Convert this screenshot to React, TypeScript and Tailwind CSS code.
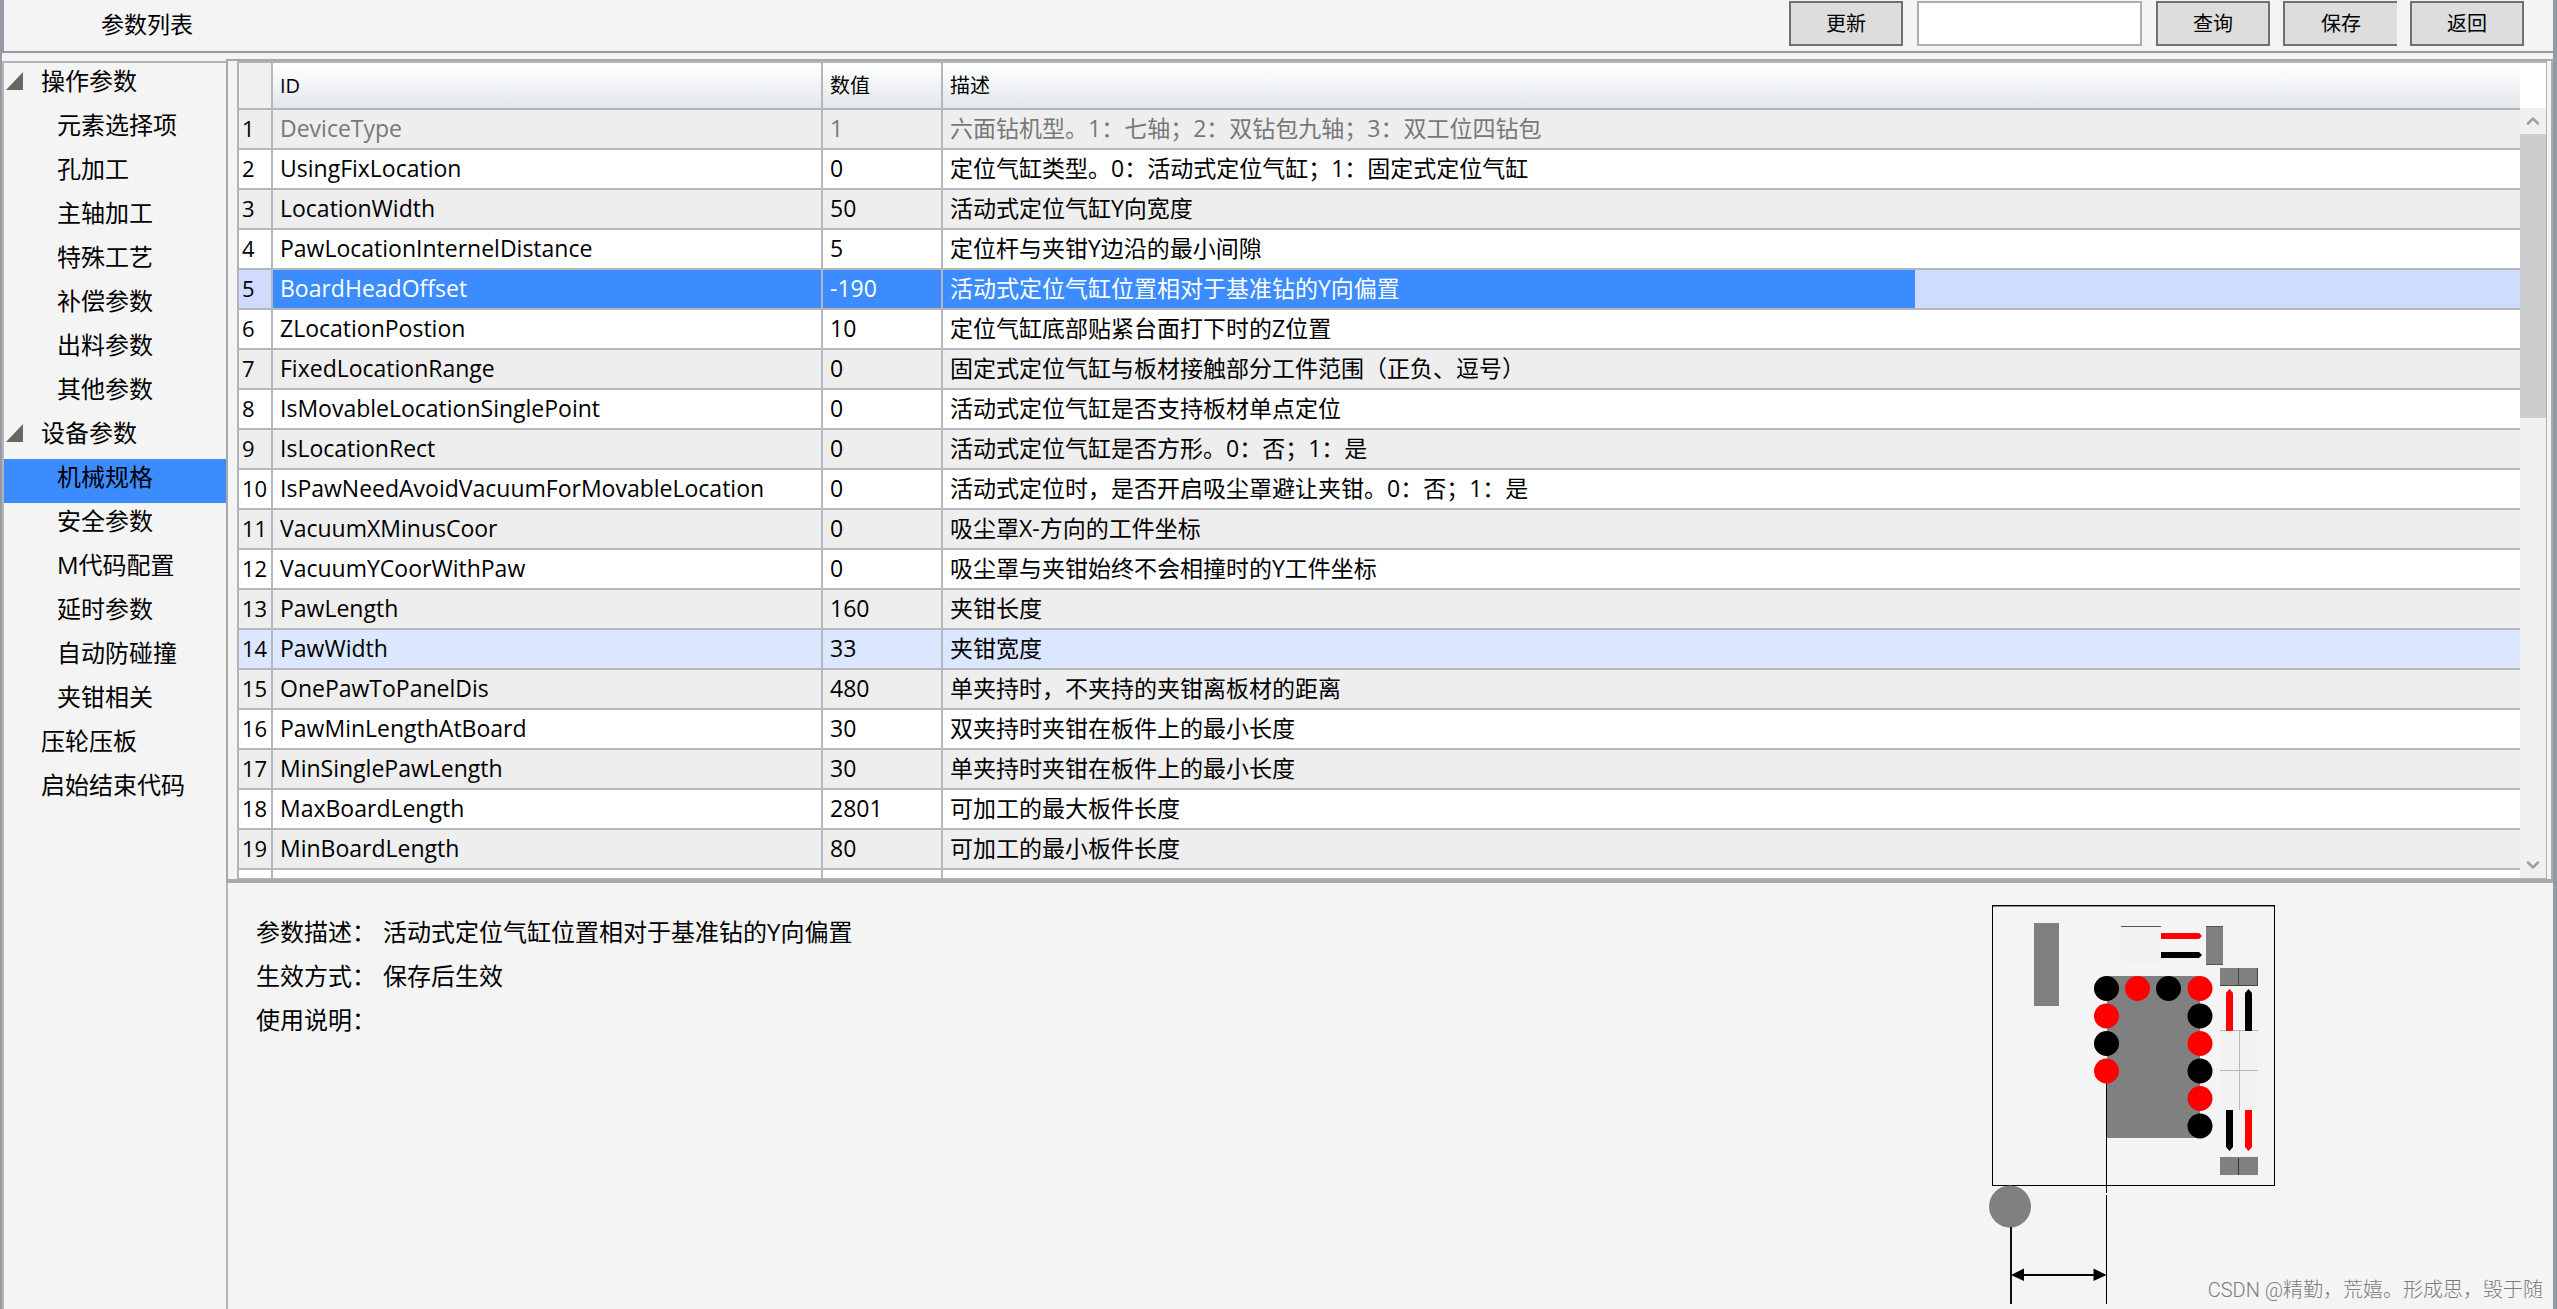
import { ChevronDown, ChevronUp } from 'lucide-react';

type Param = { id: string; value: string; desc: string };

const params: Param[] = [
  { id: 'DeviceType', value: '1', desc: '六面钻机型。1：七轴；2：双钻包九轴；3：双工位四钻包' },
  { id: 'UsingFixLocation', value: '0', desc: '定位气缸类型。0：活动式定位气缸；1：固定式定位气缸' },
  { id: 'LocationWidth', value: '50', desc: '活动式定位气缸Y向宽度' },
  { id: 'PawLocationInternelDistance', value: '5', desc: '定位杆与夹钳Y边沿的最小间隙' },
  { id: 'BoardHeadOffset', value: '-190', desc: '活动式定位气缸位置相对于基准钻的Y向偏置' },
  { id: 'ZLocationPostion', value: '10', desc: '定位气缸底部贴紧台面打下时的Z位置' },
  { id: 'FixedLocationRange', value: '0', desc: '固定式定位气缸与板材接触部分工件范围（正负、逗号）' },
  { id: 'IsMovableLocationSinglePoint', value: '0', desc: '活动式定位气缸是否支持板材单点定位' },
  { id: 'IsLocationRect', value: '0', desc: '活动式定位气缸是否方形。0：否；1：是' },
  { id: 'IsPawNeedAvoidVacuumForMovableLocation', value: '0', desc: '活动式定位时，是否开启吸尘罩避让夹钳。0：否；1：是' },
  { id: 'VacuumXMinusCoor', value: '0', desc: '吸尘罩X-方向的工件坐标' },
  { id: 'VacuumYCoorWithPaw', value: '0', desc: '吸尘罩与夹钳始终不会相撞时的Y工件坐标' },
  { id: 'PawLength', value: '160', desc: '夹钳长度' },
  { id: 'PawWidth', value: '33', desc: '夹钳宽度' },
  { id: 'OnePawToPanelDis', value: '480', desc: '单夹持时，不夹持的夹钳离板材的距离' },
  { id: 'PawMinLengthAtBoard', value: '30', desc: '双夹持时夹钳在板件上的最小长度' },
  { id: 'MinSinglePawLength', value: '30', desc: '单夹持时夹钳在板件上的最小长度' },
  { id: 'MaxBoardLength', value: '2801', desc: '可加工的最大板件长度' },
  { id: 'MinBoardLength', value: '80', desc: '可加工的最小板件长度' },
];

const SELECTED = 4;
const HOVERED = 13;

type Group = { label: string; children?: string[] };

const groups: Group[] = [
  { label: '操作参数', children: ['元素选择项', '孔加工', '主轴加工', '特殊工艺', '补偿参数', '出料参数', '其他参数'] },
  { label: '设备参数', children: ['机械规格', '安全参数', 'M代码配置', '延时参数', '自动防碰撞', '夹钳相关'] },
  { label: '压轮压板' },
  { label: '启始结束代码' },
];

function ToolButton({ label, open = false }: { label: string; open?: boolean }) {
  return (
    <button
      type="button"
      className={`h-[45px] w-[114px] border-2 border-[#707070] bg-[#dddddd] text-xl leading-none ${open ? 'border-r-0' : ''}`}
    >
      {label}
    </button>
  );
}

function Toolbar() {
  return (
    <header className="flex h-[53px] shrink-0 items-start border-x-4 border-b-2 border-[#9599a5] bg-[#f4f4f4] pr-[29px] pt-px">
      <h1 className="ml-[97px] mt-[5px] text-[23px] leading-9">参数列表</h1>
      <div className="ml-auto flex">
        <ToolButton label="更新" />
        <input
          type="text"
          aria-label="查询内容"
          className="mx-[14px] h-[45px] w-[225px] border-2 border-[#abadb3] bg-white px-2 text-xl outline-none"
        />
        <div className="flex gap-[13px]">
          <ToolButton label="查询" />
          <ToolButton label="保存" open />
          <ToolButton label="返回" />
        </div>
      </div>
    </header>
  );
}

function Sidebar() {
  return (
    <nav aria-label="参数分类" className="mt-2 w-[224px] shrink-0 border-l-2 border-t-2 border-[#b5b5b5] text-2xl">
      <ul>
        {groups.map((group) => (
          <li key={group.label}>
            <button type="button" className="flex h-11 w-full items-center pb-2 text-left">
              <span className="flex w-[37px] justify-start pl-[2px]">
                {group.children && (
                  <svg aria-hidden="true" width="18" height="18" viewBox="0 0 18 18">
                    <path d="M17 0V18H0Z" fill="#67665f" />
                  </svg>
                )}
              </span>
              {group.label}
            </button>
            {group.children && (
              <ul>
                {group.children.map((child) => (
                  <li key={child}>
                    <button
                      type="button"
                      className={`flex h-11 w-full items-center pb-2 pl-[53px] text-left ${child === '机械规格' ? 'bg-[#3c8cff]' : ''}`}
                    >
                      {child}
                    </button>
                  </li>
                ))}
              </ul>
            )}
          </li>
        ))}
      </ul>
    </nav>
  );
}

function rowColor(index: number) {
  if (index === SELECTED) return 'bg-[#d0dcff]';
  if (index === HOVERED) return 'bg-[#dbe6ff]';
  return index % 2 === 0 ? 'bg-[#eeeeee]' : 'bg-white';
}

function ParamTable() {
  return (
    <table className="w-full table-fixed border-separate border-spacing-0 text-left text-[23px] leading-[34px]">
      <colgroup>
        <col className="w-[34px]" />
        <col className="w-[550px]" />
        <col className="w-[120px]" />
        <col className="w-[972px]" />
        <col />
      </colgroup>
      <thead>
        <tr className="h-[47px] bg-linear-to-b from-white to-[#e2e7eb] text-xl">
          <th className="border-b-2 border-r-2 border-[#b4b7bb] bg-[#f0f0f0]" aria-label="序号" />
          <th className="border-b-2 border-r-2 border-[#b4b7bb] px-[7px] font-normal">ID</th>
          <th className="border-b-2 border-r-2 border-[#b4b7bb] px-[7px] font-normal">数值</th>
          <th className="border-b-2 border-[#b4b7bb] px-[7px] font-normal">描述</th>
          <td className="border-b-2 border-[#b4b7bb]" />
        </tr>
      </thead>
      <tbody>
        {params.map((param, index) => {
          const fill = index === SELECTED ? 'bg-[#3c8cff] text-white' : index === 0 ? 'text-[#787878]' : '';
          return (
            <tr key={param.id} className={`h-10 ${rowColor(index)}`}>
              <td className="whitespace-nowrap border-b-2 border-r-2 border-[#b4b7bb] pb-[2px] pl-[3px] text-[22px]">{index + 1}</td>
              <td className={`border-b-2 border-r-2 border-[#b4b7bb] px-[7px] pb-[2px] ${fill}`}>{param.id}</td>
              <td className={`border-b-2 border-r-2 border-[#b4b7bb] px-[7px] pb-[2px] ${fill}`}>{param.value}</td>
              <td className={`whitespace-nowrap border-b-2 border-[#b4b7bb] px-[7px] pb-[2px] ${fill}`}>{param.desc}</td>
              <td className="border-b-2 border-[#b4b7bb]" />
            </tr>
          );
        })}
        <tr className="h-10 bg-white">
          <td className="border-r-2 border-[#b4b7bb]" />
          <td className="border-r-2 border-[#b4b7bb]" />
          <td className="border-r-2 border-[#b4b7bb]" />
          <td />
          <td />
        </tr>
      </tbody>
    </table>
  );
}

function ScrollBar() {
  return (
    <div className="flex w-[26px] shrink-0 flex-col bg-white pt-[45px]">
      <div className="flex min-h-0 flex-1 flex-col bg-[#f0f0f0]">
        <button type="button" aria-label="向上滚动" className="flex h-[26px] items-center justify-center text-[#a0a0a0]">
          <ChevronUp size={20} strokeWidth={3} />
        </button>
        <div className="h-[284px] bg-[#cdcdcd]" />
        <button type="button" aria-label="向下滚动" className="mt-auto flex h-[26px] items-center justify-center text-[#a0a0a0]">
          <ChevronDown size={20} strokeWidth={3} />
        </button>
      </div>
    </div>
  );
}

const drills: [number, number, string][] = [
  [146.5, 108.5, '#000'],
  [177.5, 108.5, '#f00'],
  [208.5, 108.5, '#000'],
  [240, 108.5, '#f00'],
  [146.5, 136, '#f00'],
  [146.5, 163.5, '#000'],
  [146.5, 191, '#f00'],
  [240, 136, '#000'],
  [240, 163.5, '#f00'],
  [240, 191, '#000'],
  [240, 218.5, '#f00'],
  [240, 246, '#000'],
];

function MachineDiagram() {
  return (
    <svg role="img" aria-label="基准钻示意图" width="340" height="426" viewBox="0 3 340 426" className="shrink-0">
      <rect x="32.5" y="25.5" width="282" height="280" fill="none" stroke="#000" />
      <path d="M33 26.5H314" stroke="#8a8a8a" />
      <rect x="74" y="43" width="25" height="83" fill="#808080" />
      <rect x="161" y="46" width="40" height="38" fill="#f2f2f2" />
      <path d="M161 46.5H201" stroke="#555" />
      <path d="M201 53H239L242 56L239 59H201Z" fill="#f00" />
      <path d="M201 72H239L242 75L239 78H201Z" fill="#000" />
      <rect x="246" y="46" width="17" height="39" fill="#808080" />
      <path d="M246 46.5H263M246 84.5H263" stroke="#555" />
      <rect x="260" y="88" width="38" height="18" fill="#808080" />
      <path d="M278.5 88V106M297.5 88V106M260 105.5H298" stroke="#444" />
      <rect x="147" y="96" width="93" height="162" fill="#808080" />
      <path d="M146.5 191V313M146.5 315V424" stroke="#000" />
      {drills.map(([cx, cy, color]) => (
        <circle key={`${cx}-${cy}`} cx={cx} cy={cy} r="12.5" fill={color} />
      ))}
      <rect x="260" y="150" width="38" height="80" fill="#f2f2f2" />
      <path d="M260 150.5H298M260 190.5H298M279.5 151V230" stroke="#b8b8b8" />
      <path d="M266 151V113L269.5 109L273 113V151Z" fill="#f00" />
      <path d="M285 151V113L288.5 109L292 113V151Z" fill="#000" />
      <path d="M266 230V267L269.5 271L273 267V230Z" fill="#000" />
      <path d="M285 230V267L288.5 271L292 267V230Z" fill="#f00" />
      <rect x="260" y="277" width="38" height="18" fill="#808080" />
      <path d="M278.5 278V295" stroke="#333" />
      <circle cx="50" cy="326.5" r="21" fill="#808080" />
      <path d="M51 347V424" stroke="#111" strokeWidth="2" />
      <path d="M60 395H140" stroke="#000" strokeWidth="2" />
      <path d="M51 395L64 388.5V401Z" fill="#000" />
      <path d="M146.5 395L133.5 388.5V401Z" fill="#000" />
    </svg>
  );
}

function DetailPanel() {
  return (
    <section className="flex shrink-0 items-start justify-between border-l-2 border-[#b4b4b4] pr-[253px]">
      <dl className="mt-[27px] grid grid-cols-[127px_auto] pl-7 text-2xl leading-[44px]">
        <dt>参数描述：</dt>
        <dd>活动式定位气缸位置相对于基准钻的Y向偏置</dd>
        <dt>生效方式：</dt>
        <dd>保存后生效</dd>
        <dt>使用说明：</dt>
        <dd />
      </dl>
      <MachineDiagram />
    </section>
  );
}

export default function App() {
  return (
    <div className="relative flex h-screen flex-col overflow-hidden bg-[#f4f4f4] font-['Open_Sans','Noto_Sans_CJK_SC',sans-serif] text-black">
      <Toolbar />
      <div className="flex min-h-0 flex-1 border-l-2 border-r-4 border-[#9599a5]">
        <Sidebar />
        <main className="flex min-w-0 flex-1 flex-col">
          <div className="mt-[6px] flex min-h-0 flex-1 border-2 border-b-4 border-[#a9a9a9] pl-[9px] pr-1">
            <div className="flex min-w-0 flex-1 overflow-hidden border-2 border-b border-r border-[#b0b3b8]">
              <div className="min-w-0 flex-1 overflow-hidden">
                <ParamTable />
              </div>
              <ScrollBar />
            </div>
          </div>
          <DetailPanel />
        </main>
      </div>
      <p className="absolute bottom-[5px] right-[14px] font-['Roboto','Noto_Sans_CJK_SC',sans-serif] text-xl font-light text-[#7c7c7c]">
        CSDN @精勤，荒嬉。形成思，毁于随
      </p>
    </div>
  );
}
